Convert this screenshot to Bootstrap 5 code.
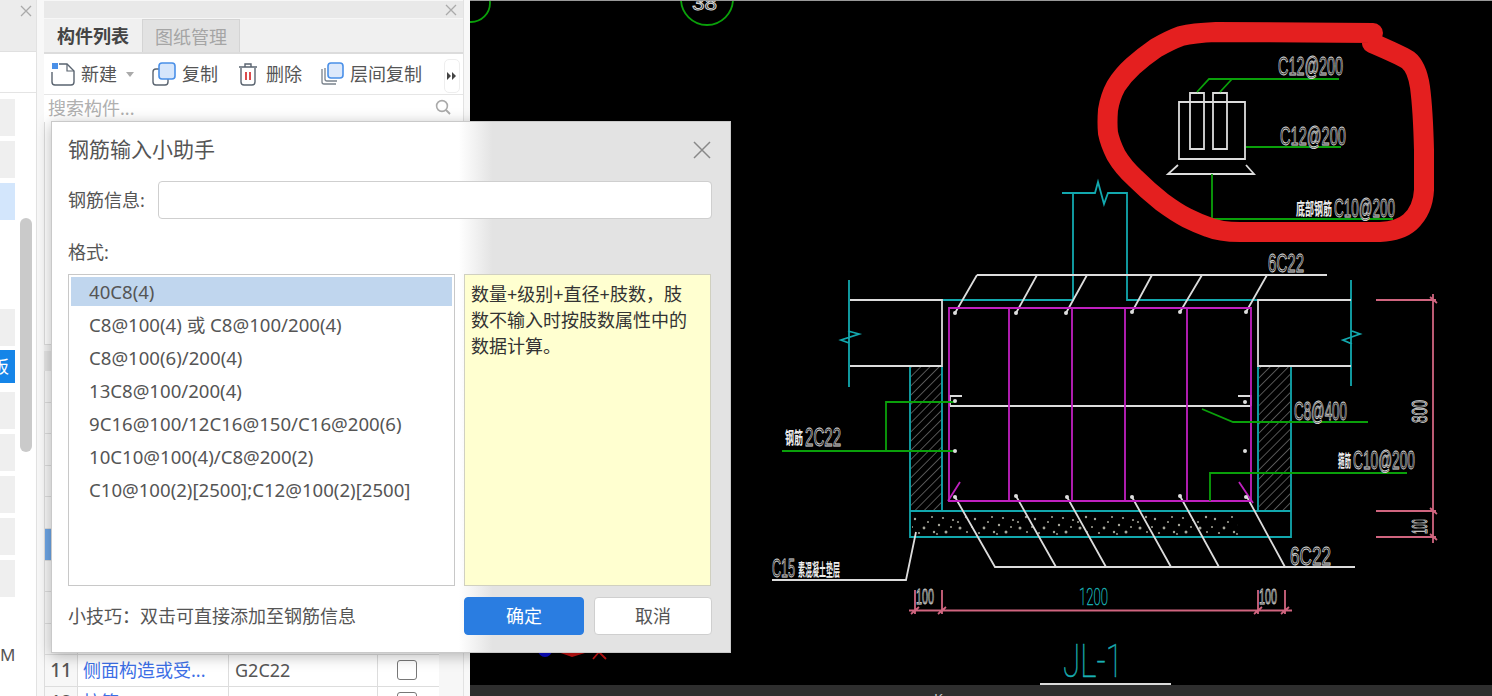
<!DOCTYPE html>
<html lang="zh-CN">
<head>
    <meta charset="UTF-8">
    <meta name="viewport" content="width=device-width, initial-scale=1.0">
    <title>钢筋输入小助手</title>
    <link href="https://cdn.jsdelivr.net/npm/bootstrap@5.3.0/dist/css/bootstrap.min.css" rel="stylesheet">
    <style>
        html, body { height: 696px; overflow: hidden; }
        body { background: #f8f8f8; font-family: "Noto Sans", "Noto Sans CJK SC", sans-serif; color: #555; }
        .app-wrap { position: relative; height: 696px; width: 1492px; overflow: hidden; }

        /* left strip */
        .side-strip { width: 37px; flex: none; background: #fff; border-right: 1px solid #e2e2e2; position: relative; overflow: hidden; }
        .side-head { height: 52px; background: #ececec; border-bottom: 1px solid #e0e0e0; }
        .side-close { height: 22px; padding-right: 3px; color: #999; }
        .side-sub { height: 41px; border-bottom: 1px solid #e4e4e4; }
        .side-item { width: 15px; height: 37px; background: #efefef; margin-bottom: 5px; }
        .side-item.on { background: #d3e6fc; }
        .side-item.act { background: #1585e8; color: #fff; font-size: 17px; line-height: 34px; height: 33px; margin-bottom: 9px; margin-top: -1px; text-indent: -8px; overflow: hidden; }
        .side-list { padding-top: 6px; }
        .side-jump { margin-top: 89px; }
        .side-m { font-size: 17px; line-height: 20px; margin-top: 48px; width: 15px; overflow: hidden; color: #555; white-space: nowrap; }
        .side-scroll { position: absolute; left: 20px; top: 218px; width: 12px; height: 234px; border-radius: 6px; background: #cacaca; }

        /* component panel */
        .comp-panel { width: 420px; margin-left: 7px; flex: none; background: #f7f7f7; border-right: 1px solid #e2e2e2; overflow: hidden; }
        .panel-head { height: 17px; margin-top: 1px; background: #e9e9e9; padding-right: 5px; color: #999; }
        .tab-row { height: 35px; margin-top: 1px; background: #f0f0f0; border-bottom: 2px solid #dcdcdc; }
        .tab-item { width: 98px; height: 33px; font-size: 18px; line-height: 34px; text-align: center; }
        .tab-item.on { font-weight: 700; color: #444; }
        .tab-item.off { background: #e2e2e2; color: #a5a5a5; border: 1px solid #d4d4d4; border-bottom: 0; }
        .tool-row { height: 41px; background: #fff; border-bottom: 1px solid #e6e6e6; font-size: 18px; position: relative; white-space: nowrap; padding-left: 7px; }
        .tool-lbl { margin-left: 6px; }
        .tool-caret { margin-left: 9px; }
        .tool-copy { margin-left: 18px; }
        .tool-del { margin-left: 20px; }
        .tool-del-lbl { margin-left: 8px; }
        .tool-floor { margin-left: 18px; }
        .tool-more { position: absolute; right: 3px; top: 5px; width: 16px; height: 34px; border: 1px solid #eee; border-radius: 5px; }
        .search-row { height: 27px; background: #fff; color: #b0b0b0; font-size: 18px; line-height: 26px; padding: 0 12px 0 4px; }
        .blank-zone { height: 222px; background: #fff; border-left: 1px solid #ddd; }
        .head-bar { height: 7px; background: #f2f2f2; border-top: 1px solid #ddd; }
        .grid-head { height: 20px; background: #e4e4e4; }
        .grid-row { height: 31.6px; background: #fff; border-bottom: 1px solid #ddd; width: 395px; border-left: 1px solid #ddd; font-size: 18px; line-height: 30px; white-space: nowrap; }
        .cell-no { width: 33px; flex: none; text-align: center; background: #f7f7f7; border-right: 1px solid #ddd; font-weight: 500; font-size: 19px; }
        .cell-no.sel { background: #6ea6e6; }
        .cell-name { width: 151px; flex: none; padding-left: 5px; color: #3c6fe6; border-right: 1px solid #ddd; }
        .cell-val { width: 149px; flex: none; padding-left: 6px; border-right: 1px solid #ddd; }
        .cell-chk { flex-grow: 1; }
        .chk-box { width: 20px; height: 20px; border: 1px solid #777; border-radius: 3px; background: #fff; margin: 5px 0 0 19px; }

        /* cad */
        .cad-pane { flex-grow: 1; margin-left: 6px; background: #000; position: relative; overflow: hidden; border-top: 1px solid #999; }
        .cad-svg { display: block; width: 1022px; height: 684px; }
        .cad-foot { height: 11px; background: #2e2e2e; color: #ccc; font-size: 14px; line-height: 16px; padding: 6px 0 0 464px; overflow: hidden; white-space: nowrap; }
        .foot-s { margin-left: 30px; }
        .cad-txt { font-family: "Liberation Sans", sans-serif; font-size: 26px; fill: #111; stroke: #dcdcdc; stroke-width: .9; }
        .cad-thin { font-family: "Roboto", "Liberation Sans", sans-serif; font-weight: 100; fill: #19b0b4; stroke: #19b0b4; stroke-width: .5; }
        .cad-cn { font-family: "Noto Sans CJK SC", sans-serif; font-size: 17px; font-weight: 700; fill: #eee; }
        .ln { fill: none; stroke-width: 1.8; }
        .w { stroke: #dcdcdc; }
        .t { stroke: #12a8ae; }
        .g { stroke: #0aa00a; }
        .m { stroke: #c020c0; }
        .p { stroke: #d0657f; }

        /* dialog */
        .rebar-dlg { position: absolute; left: 51px; top: 121px; width: 680px; height: 532px; padding: 0 18px 0 16px; border: 1px solid #c9c9c9; background: linear-gradient(90deg, #fff 0, #fff 60%, #e3e3e3 65%); box-shadow: 0 3px 14px rgba(0,0,0,.28); font-size: 18px; }
        .dlg-title { height: 59px; padding-bottom: 3px; font-size: 21px; color: #555; }
        .dlg-close { margin-right: 1px; }
        .dlg-input.form-control { height: 38px; width: 554px; border: 1px solid #cfcfcf; border-radius: 4px; margin-left: 13px; padding: 0; box-shadow: none; }
        .dlg-fmt { height: 55px; padding-top: 23px; line-height: 20px; }
        .fmt-list { width: 387px; height: 312px; background: #fff; border: 1px solid #c8c8c8; border-radius: 0; padding: 2px; flex: none; }
        .fmt-item.list-group-item { height: 29px; margin-bottom: 4px; line-height: 29px; padding: 0 0 0 18px; white-space: nowrap; border: 0; background: transparent; color: #555; border-radius: 0; font-size: 18.6px; }
        .fmt-item.list-group-item.active { background: #c0d6ee; color: #555; }
        .fmt-tip { width: 247px; height: 312px; margin-left: 9px; background: #ffffd0; border: 1px solid #d0d0c0; padding: 6px 6px; line-height: 26px; color: #333; flex: none; white-space: nowrap; font-size: 18px; }
        .dlg-foot { margin-top: 11px; font-size: 18px; }
        .dlg-btn.btn { width: 120px; height: 38px; border-radius: 4px; font-size: 18px; padding: 0; line-height: 36px; }
        .dlg-btn.btn-primary { background: #2a7de1; border-color: #2a7de1; }
        .dlg-btn.btn-light { width: 118px; background: #fff; border-color: #cfcfcf; color: #555; margin-left: 10px; }
    </style>
</head>
<body>
<div class="app-wrap d-flex">

    <!-- left strip -->
    <div class="side-strip">
        <div class="side-head">
            <div class="side-close d-flex justify-content-end align-items-center">
                <svg width="14" height="14" viewBox="0 0 14 14"><path d="M2 2l10 10M12 2L2 12" stroke="#aaa" stroke-width="1.3"/></svg>
            </div>
        </div>
        <div class="side-sub"></div>
        <div class="side-list">
            <div class="side-item"></div>
            <div class="side-item"></div>
            <div class="side-item on"></div>
            <div class="side-item side-jump"></div>
            <div class="side-item act">板</div>
            <div class="side-item"></div>
            <div class="side-item"></div>
            <div class="side-item"></div>
            <div class="side-item"></div>
            <div class="side-item"></div>
            <div class="side-m">M:</div>
        </div>
        <div class="side-scroll"></div>
    </div>

    <!-- component panel -->
    <div class="comp-panel">
        <div class="panel-head d-flex justify-content-end align-items-center">
            <svg width="14" height="14" viewBox="0 0 14 14"><path d="M2 2l10 10M12 2L2 12" stroke="#aaa" stroke-width="1.3"/></svg>
        </div>
        <div class="tab-row d-flex">
            <div class="tab-item on">构件列表</div>
            <div class="tab-item off">图纸管理</div>
        </div>
        <div class="tool-row d-flex align-items-center">
            <svg width="24" height="24" viewBox="0 0 24 24"><path d="M8 2h8l7 7v11a3 3 0 0 1-3 3H4a3 3 0 0 1-3-3V10" fill="#fff" stroke="#5a6470" stroke-width="1.4"/><path d="M16 2v7h7" fill="none" stroke="#5a6470" stroke-width="1.2"/><rect x="1" y="1" width="6" height="6" fill="#4a90e8"/></svg>
            <span class="tool-lbl">新建</span>
            <svg class="tool-caret" width="8" height="5" viewBox="0 0 8 5"><path d="M0 0h8L4 5z" fill="#aaa"/></svg>
            <svg class="tool-copy" width="24" height="24" viewBox="0 0 24 24"><rect x="1" y="7" width="15" height="16" rx="3" fill="#fff" stroke="#5a6470" stroke-width="1.4"/><rect x="7" y="1" width="16" height="16" rx="3" fill="#d6e6fb" stroke="#4a90e8" stroke-width="1.6"/></svg>
            <span class="tool-lbl">复制</span>
            <svg class="tool-del" width="20" height="24" viewBox="0 0 20 24"><path d="M3 6v14a3 3 0 0 0 3 3h8a3 3 0 0 0 3-3V6M1 5h18M7 5V2h6v3" fill="none" stroke="#5a6470" stroke-width="1.4"/><path d="M8 10v8M12 10v8" stroke="#d9383a" stroke-width="1.8"/></svg>
            <span class="tool-del-lbl">删除</span>
            <svg class="tool-floor" width="24" height="24" viewBox="0 0 24 24"><path d="M2 7v13a2 2 0 0 0 2 2h12M5 6v11a2 2 0 0 0 2 2h10" fill="none" stroke="#7a828c" stroke-width="1.3"/><rect x="8" y="1" width="15" height="15" rx="3" fill="#dde9fb" stroke="#4a90e8" stroke-width="1.6"/></svg>
            <span class="tool-lbl">层间复制</span>
            <div class="tool-more d-flex align-items-center justify-content-center">
                <svg width="10" height="8" viewBox="0 0 10 8"><path d="M0 0l4 4-4 4zM5 0l4 4-4 4z" fill="#444"/></svg>
            </div>
        </div>
        <div class="search-row d-flex justify-content-between">
            <span>搜索构件...</span>
            <svg class="mt-1" width="16" height="16" viewBox="0 0 16 16"><circle cx="7" cy="7" r="5.4" fill="none" stroke="#aaa" stroke-width="1.6"/><path d="M11 11l4 4" stroke="#aaa" stroke-width="1.8"/></svg>
        </div>
        <div class="blank-zone"></div>
        <div class="head-bar"></div>
        <div class="grid-head"></div>
        <div class="grid-row d-flex"><div class="cell-no"></div></div>
        <div class="grid-row d-flex"><div class="cell-no"></div></div>
        <div class="grid-row d-flex"><div class="cell-no"></div></div>
        <div class="grid-row d-flex"><div class="cell-no"></div></div>
        <div class="grid-row d-flex"><div class="cell-no"></div></div>
        <div class="grid-row d-flex"><div class="cell-no sel"></div></div>
        <div class="grid-row d-flex"><div class="cell-no"></div></div>
        <div class="grid-row d-flex"><div class="cell-no"></div></div>
        <div class="grid-row d-flex"><div class="cell-no"></div></div>
        <div class="grid-row d-flex">
            <div class="cell-no">11</div>
            <div class="cell-name">侧面构造或受...</div>
            <div class="cell-val">G2C22</div>
            <div class="cell-chk"><div class="chk-box"></div></div>
        </div>
        <div class="grid-row d-flex">
            <div class="cell-no">12</div>
            <div class="cell-name">拉筋</div>
            <div class="cell-val">C8@400</div>
            <div class="cell-chk"><div class="chk-box"></div></div>
        </div>
    </div>

    <!-- drawing -->
    <div class="cad-pane">
        <svg class="cad-svg" viewBox="470 1 1022 684">
            <defs>
                <pattern id="hatch" width="6.5" height="6.5" patternUnits="userSpaceOnUse" patternTransform="rotate(45)">
                    <path d="M0 0v6.5" stroke="#8a8a8a" stroke-width="1.2"/>
                </pattern>
                <pattern id="conc" x="910" y="513" width="60" height="24" patternUnits="userSpaceOnUse">
                    <g fill="#a5a59a">
                        <circle cx="5" cy="6" r="1.2"/><circle cx="14" cy="15" r="1.4"/><circle cx="22" cy="4" r="1"/>
                        <circle cx="29" cy="12" r="1.2"/><circle cx="36" cy="19" r="1.5"/><circle cx="43" cy="7" r="1.1"/>
                        <circle cx="50" cy="15" r="1.5"/><circle cx="56" cy="4" r="1.2"/><circle cx="9" cy="20" r="1.1"/>
                        <circle cx="24" cy="19" r="1.2"/><circle cx="48" cy="9" r="1"/><circle cx="18" cy="9" r="1"/>
                        <circle cx="33" cy="5" r="1.1"/><circle cx="57" cy="19" r="1"/><circle cx="41" cy="14" r="1"/>
                        <circle cx="2" cy="14" r="1"/><circle cx="27" cy="21" r=".9"/>
                    </g>
                </pattern>
            </defs>

            <!-- grid bubbles -->
            <circle class="ln g" cx="471" cy="3" r="19"/>
            <circle class="ln g" cx="707" cy="-1" r="26"/>
            <text class="cad-txt" x="692" y="10" textLength="25" lengthAdjust="spacingAndGlyphs" style="font-size:20px">38</text>

            <!-- concrete and hatching -->
            <rect x="912" y="513" width="326" height="23" fill="url(#conc)"/>
            <rect x="911" y="366" width="31" height="145" fill="url(#hatch)"/>
            <rect x="1259" y="366" width="31" height="145" fill="url(#hatch)"/>

            <!-- teal outline -->
            <path class="ln t" d="M849 280V387M848 331L859 334L841 340L849 343"/>
            <path class="ln t" d="M1351 280V386M1352 331L1360 334L1343 340L1352 344"/>
            <path class="ln t" d="M942 300H1073V193M1062 193H1095L1098 182L1104 204L1108 193H1127V300H1258"/>
            <path class="ln t" d="M910 366V537H1291V366M910 511H1291M942 366V511M1258 366V511"/>

            <!-- white beam -->
            <path class="ln w" d="M850 300H942V366H850M1351 300H1258V366H1351"/>
            <path class="ln w" d="M977 275H1327M977 275L955 313M1037 275L1016 313M1087 275L1066 313M1152 275L1132 312M1202 275L1180 312M1267 275L1246 312"/>
            <path class="ln w" d="M950 406H1251M950 406V396H962M1251 406V396H1238"/>
            <path class="ln w" d="M955 497L995 567H1355M1016 496L1056 567M1067 497L1106 567M1132 497L1171 567M1180 496L1219 567M1247 497L1285 567"/>
            <path class="ln w" d="M772 580H906L916 532"/>

            <!-- stirrups -->
            <path class="ln m" d="M949 308H1251V501H949ZM1009 308V501M1072 308V501M1125 308V501M1187 308V501"/>
            <path class="ln m" d="M1239 482L1253 503M960 482L948 501"/>

            <!-- leaders -->
            <path class="ln g" d="M782 451H955M886 451V402H955"/>
            <path class="ln g" d="M1202 409L1233 422H1368M1210 501V473H1407"/>

            <!-- bar dots -->
            <g fill="#ddd">
                <circle cx="955" cy="313" r="2"/><circle cx="1016" cy="313" r="2"/><circle cx="1066" cy="313" r="2"/><circle cx="1132" cy="312" r="2"/><circle cx="1180" cy="312" r="2"/><circle cx="1246" cy="312" r="2"/>
                <circle cx="955" cy="401" r="2"/><circle cx="955" cy="451" r="2"/><circle cx="1245" cy="402" r="2"/><circle cx="1245" cy="451" r="2"/>
                <circle cx="955" cy="497" r="2"/><circle cx="1016" cy="496" r="2"/><circle cx="1067" cy="497" r="2"/><circle cx="1132" cy="497" r="2"/><circle cx="1180" cy="496" r="2"/><circle cx="1246" cy="497" r="2"/>
            </g>

            <!-- dimensions -->
            <path class="ln p" d="M909 610.5H1292M915 590V614M942 590V614M1258 590V614M1285 590V614M911 614L919 607M938 614L946 607M1254 614L1262 607M1281 614L1289 607"/>
            <path class="ln p" d="M1433 294V543M1376 300H1436M1376 511H1436M1376 537H1436M1430 297L1437 303M1430 508L1437 514M1430 534L1437 540"/>

            <!-- section detail -->
            <path class="ln w" d="M1179 102H1245V159H1179ZM1190 93H1204V149H1190ZM1213 93H1227V149H1213ZM1178 165L1168 174H1254L1246 165"/>
            <path class="ln g" d="M1197 92L1209 79H1339M1220 92L1232 79M1246 147H1341M1212 174V219H1393"/>

            <!-- labels -->
            <text class="cad-txt" x="1278" y="75" textLength="65" lengthAdjust="spacingAndGlyphs">C12@200</text>
            <text class="cad-txt" x="1280" y="145" textLength="66" lengthAdjust="spacingAndGlyphs">C12@200</text>
            <text class="cad-cn" x="1296" y="215" textLength="36" lengthAdjust="spacingAndGlyphs">底部钢筋</text>
            <text class="cad-txt" x="1334" y="217" textLength="61" lengthAdjust="spacingAndGlyphs">C10@200</text>
            <text class="cad-txt" x="1268" y="272" textLength="36" lengthAdjust="spacingAndGlyphs">6C22</text>
            <text class="cad-txt" x="1294" y="420" textLength="53" lengthAdjust="spacingAndGlyphs">C8@400</text>
            <text class="cad-cn" x="1338" y="467" textLength="13" lengthAdjust="spacingAndGlyphs">箍筋</text>
            <text class="cad-txt" x="1353" y="469" textLength="62" lengthAdjust="spacingAndGlyphs">C10@200</text>
            <text class="cad-cn" x="785" y="444" textLength="18" lengthAdjust="spacingAndGlyphs">钢筋</text>
            <text class="cad-txt" x="805" y="446" textLength="36" lengthAdjust="spacingAndGlyphs">2C22</text>
            <text class="cad-txt" x="1290" y="565" textLength="41" lengthAdjust="spacingAndGlyphs">6C22</text>
            <text class="cad-txt" x="772" y="577" textLength="23" lengthAdjust="spacingAndGlyphs">C15</text>
            <text class="cad-cn" x="798" y="576" textLength="42" lengthAdjust="spacingAndGlyphs">素混凝土垫层</text>
            <text class="cad-txt" x="916" y="604" textLength="18" lengthAdjust="spacingAndGlyphs" style="font-size:22px">100</text>
            <text class="cad-thin" x="1079" y="605" textLength="29" lengthAdjust="spacingAndGlyphs" style="font-size:23px">1200</text>
            <text class="cad-txt" x="1259" y="604" textLength="18" lengthAdjust="spacingAndGlyphs" style="font-size:22px">100</text>
            <text class="cad-txt" transform="translate(1427 423) rotate(-90)" textLength="23" lengthAdjust="spacingAndGlyphs" style="font-size:22px">800</text>
            <text class="cad-txt" transform="translate(1427 534) rotate(-90)" textLength="15" lengthAdjust="spacingAndGlyphs" style="font-size:22px">100</text>
            <text class="cad-thin" x="1063" y="677" textLength="60" lengthAdjust="spacingAndGlyphs" style="font-size:46px">JL-1</text>
            <path class="ln w" d="M1040 684H1171"/>

            <!-- axis marks under the dialog -->
            <circle cx="545" cy="650" r="7" fill="#0a0ac8"/>
            <path d="M555 651H572V650L585 653L572 657Z" fill="#c81414"/>
            <path d="M593 659L599 652L606 659" fill="none" stroke="#c81414" stroke-width="1.8"/>

            <!-- hand-drawn marking -->
            <path d="M1373 33L1216 32Q1193 33 1181 36Q1170 40 1156 48Q1143 57 1133 66Q1123 75 1116 86Q1110 97 1108 110Q1107 123 1108 133Q1110 143 1116 155Q1123 167 1135 178Q1147 190 1162 202Q1177 213 1187 218Q1197 223 1208 227Q1220 232 1240 232L1380 232Q1400 231 1410 222Q1423 210 1424 190L1424 150Q1423 110 1420 87Q1417 67 1408 60Q1400 55 1372 43" fill="none" stroke="#e41f1f" stroke-width="20" stroke-linecap="round" stroke-linejoin="round"/>
        </svg>
        <div class="cad-foot"><span>K</span><span class="foot-s">s</span></div>
    </div>

    <!-- dialog -->
    <div class="rebar-dlg d-flex flex-column">
        <div class="dlg-title d-flex justify-content-between align-items-center">
            <span>钢筋输入小助手</span>
            <svg class="dlg-close" width="18" height="18" viewBox="0 0 18 18"><path d="M1 1l16 16M17 1L1 17" stroke="#888" stroke-width="1.5"/></svg>
        </div>
        <div class="d-flex align-items-center">
            <label>钢筋信息:</label>
            <input type="text" class="form-control dlg-input">
        </div>
        <div class="dlg-fmt">格式:</div>
        <div class="d-flex">
            <div class="fmt-list list-group">
                <div class="list-group-item fmt-item active">40C8(4)</div>
                <div class="list-group-item fmt-item">C8@100(4) 或 C8@100/200(4)</div>
                <div class="list-group-item fmt-item">C8@100(6)/200(4)</div>
                <div class="list-group-item fmt-item">13C8@100/200(4)</div>
                <div class="list-group-item fmt-item">9C16@100/12C16@150/C16@200(6)</div>
                <div class="list-group-item fmt-item">10C10@100(4)/C8@200(2)</div>
                <div class="list-group-item fmt-item">C10@100(2)[2500];C12@100(2)[2500]</div>
            </div>
            <div class="fmt-tip">数量+级别+直径+肢数&#xFF0C;肢<br>数不输入时按肢数属性中的<br>数据计算。</div>
        </div>
        <div class="dlg-foot d-flex align-items-center justify-content-between">
            <span>小技巧&#xFF1A;双击可直接添加至钢筋信息</span>
            <div class="d-flex">
                <button type="button" class="btn btn-primary dlg-btn">确定</button>
                <button type="button" class="btn btn-light dlg-btn">取消</button>
            </div>
        </div>
    </div>
</div>
<script src="https://cdn.jsdelivr.net/npm/bootstrap@5.3.0/dist/js/bootstrap.bundle.min.js"></script>
</body>
</html>
